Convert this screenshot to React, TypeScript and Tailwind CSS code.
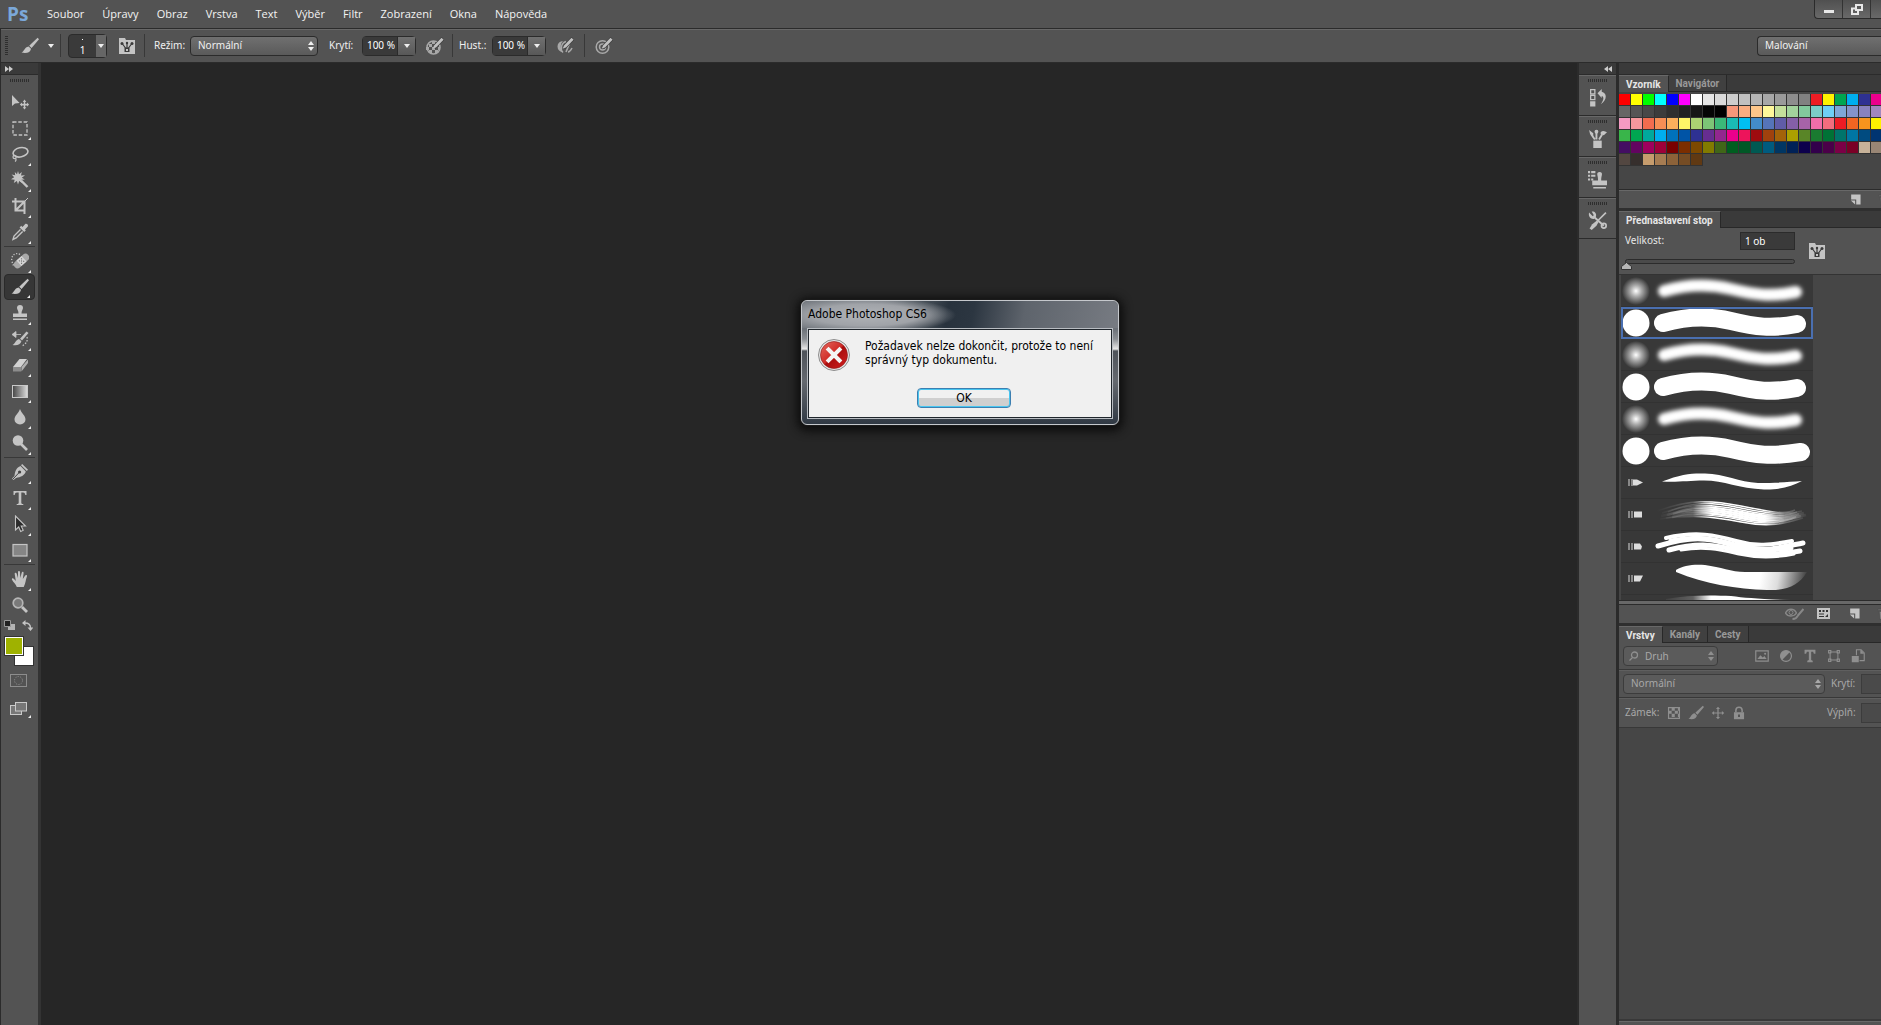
import React from 'react';

type IconProps = { children: React.ReactNode; className?: string; size?: number };

function Icon({ children, className = '', size = 18 }: IconProps) {
    return (
        <svg width={size} height={size} viewBox="0 0 18 18" fill="currentColor" className={`shrink-0 ${className}`} aria-hidden="true">
            {children}
        </svg>
    );
}

/* Shared drawings */
const brushShape = (
    <>
        <path d="M16.6 .8 18 2.2 10.6 11 8.2 8.8z" />
        <path d="M7.6 9.4 10 11.7C9.6 15.2 6 16.8.5 15.6 3.4 14.4 3.2 10 7.6 9.4z" />
    </>
);

const folderShape = (
    <>
        <path d="M1 1h6l1 2h9v14H1z" />
        <g fill="#3a3a3a">
            <path d="M6.5 10.5h5V15h-5z" />
            <circle cx="4" cy="6.5" r="1.5" />
            <circle cx="14" cy="6.5" r="1.5" />
            <circle cx="9" cy="6" r="1.2" />
        </g>
        <path d="M4.5 7l3 4M13.5 7l-3 4M9 6v5" stroke="#3a3a3a" strokeWidth="1.2" />
        <path d="M8 12h2v2H8z" />
    </>
);

const moveCross = (
    <path d="M9 1 6.4 4h1.8v4.2H4V6.4L1 9l3 2.6V9.8h4.2V14H6.4L9 17l2.6-3H9.8V9.8H14v1.8L17 9l-3-2.6v1.8H9.8V4h1.8z" />
);

const newShape = (
    <>
        <path d="M3 2h13v14h-6V9H3z" />
        <path d="M2.5 10.5h6v5.5z" />
    </>
);

const trashShape = (
    <path d="M6 1h6v2h5v2H1V3h5zM3 6h12l-1 11H4zM6 8v7M9 8v7M12 8v7" stroke="#4a4a4a" strokeWidth="1" />
);

const targetRings = (
    <g fill="none" stroke="currentColor">
        <circle cx="7.5" cy="10" r="6.3" strokeWidth="1.5" />
        <circle cx="7.5" cy="10" r="3" strokeWidth="1.5" />
    </g>
);

const penTip = (
    <>
        <path d="M17 1.5 8 10.5" stroke="#3b3b3b" strokeWidth="4" />
        <path d="M15.5 .8 17.6 2.8 10 10.4 6.8 11.6 8 8.4z" fill="#c0c0c0" />
    </>
);

type Tool = { name: string; icon: React.ReactNode; active?: boolean; single?: boolean };

const toolGroups: Tool[][] = [
    [
        {
            name: 'Přesun',
            single: true,
            icon: (
                <>
                    <path d="M1 2v11l3-2.6L8.6 10z" />
                    <path d="M13.5 6.5 11.7 9h1.1v1.8H11V9.6l-2.2 2 2.2 2v-1.2h1.8v1.8h-1.1l1.8 2.4 1.8-2.4h-1.1v-1.8h1.8v1.2l2.2-2-2.2-2v1.2h-1.8V9h1.1z" />
                </>
            ),
        },
        {
            name: 'Obdélníkový výběr',
            icon: <rect x="2" y="3" width="14" height="13" fill="none" stroke="currentColor" strokeWidth="1.3" strokeDasharray="3.5 1.8" />,
        },
        {
            name: 'Laso',
            icon: (
                <g fill="none" stroke="currentColor" strokeWidth="1.6">
                    <ellipse cx="9.5" cy="7.3" rx="7.5" ry="4.6" transform="rotate(-12 9.5 7.3)" />
                    <circle cx="3.6" cy="12" r="1.6" strokeWidth="1.2" />
                    <path d="M4.5 13.5C5.5 14.5 5 16 4 16.6" strokeWidth="1.2" />
                </g>
            ),
        },
        {
            name: 'Kouzelná hůlka',
            icon: (
                <>
                    <path d="M7 0l1 3.2L10.8 1 10 4.5l4-.2-3.2 2.4 3 1.8-3.4.2.6 3.3-2.8-2L7 13.5 5.9 10 2.8 12l.9-3.3L0 8.2l3.2-1.9L.6 3.6l3.6.6L3.8 1 6 3.2z" />
                    <path d="M10 9.5 16.5 16" stroke="currentColor" strokeWidth="2.4" />
                </>
            ),
        },
        {
            name: 'Oříznutí',
            icon: (
                <>
                    <path d="M4.5 1v12.5H14M1 4.5h12.5V17M4.5 13.5 13 5" fill="none" stroke="currentColor" strokeWidth="2" />
                    <path d="M12 6l5-5" stroke="currentColor" />
                </>
            ),
        },
        {
            name: 'Kapátko',
            icon: (
                <>
                    <path d="M11.5 4 14 1.2c1.6-1.4 4 .8 2.6 2.6L14 6.5l.8.9-1.6 1.6-4.6-4.6 1.6-1.6z" />
                    <path d="M9.5 6.5 3 13l-1 3.5L5.2 15l6.4-6.5" fill="none" stroke="currentColor" strokeWidth="1.4" />
                </>
            ),
        },
    ],
    [
        {
            name: 'Bodový retušovací štětec',
            icon: (
                <>
                    <g transform="rotate(-42 10.5 9)">
                        <rect x="1.5" y="5.3" width="18" height="7.4" rx="3.4" fill="#a9a9a9" />
                        <rect x="7" y="5.3" width="7" height="7.4" fill="#d4d4d4" />
                        <path d="M8.5 7.5h1M11.5 7.5h1M10 9h1M8.5 10.7h1M11.5 10.7h1" stroke="#555" />
                    </g>
                    <path d="M9 2.5C4-.5-.5 4.5 1 9.5s2 4 2 5" fill="none" stroke="currentColor" strokeWidth="1.3" strokeDasharray="1.2 1.6" />
                </>
            ),
        },
        { name: 'Štětec', active: true, icon: brushShape },
        {
            name: 'Klonovací razítko',
            icon: (
                <path d="M9 1a3 3 0 0 1 3 3c0 1.5-1.5 2.4-1.5 5.5H16V13H2V9.5h5.5C7.5 6.4 6 5.500 6 4a3 3 0 0 1 3-3zM2 14.5h14V16H2z" />
            ),
        },
        {
            name: 'Štětec historie',
            icon: (
                <>
                    <path d="M15.5 1.5 17.5 3 11 10.5 9 8.7z" />
                    <path d="M8 9l2.4 2.2C9.5 14.5 6 16 1.5 15c2.5-1 3-5 6.5-6z" />
                    <path d="M4 4.5h6M1 4.5l4-3v6z" stroke="currentColor" strokeWidth=".8" />
                    <path d="M16 7c1 4-1 7-5 9" fill="none" stroke="currentColor" strokeWidth="1.3" strokeDasharray="1.5 1.5" />
                </>
            ),
        },
        {
            name: 'Guma',
            icon: (
                <>
                    <path d="M8.5 3H16l-6 8H2z" fill="#d2d2d2" />
                    <path d="M2 11h8v4.5H2z" fill="#8c8c8c" />
                    <path d="M10.5 11 17 3.5V7l-6.5 8.500z" fill="#b0b0b0" />
                </>
            ),
        },
        {
            name: 'Přechod',
            icon: (
                <>
                    <defs>
                        <linearGradient id="gradTool">
                            <stop offset="0" stopColor="#444" />
                            <stop offset="1" stopColor="#ddd" />
                        </linearGradient>
                    </defs>
                    <rect x="1.5" y="3.5" width="15" height="12" fill="url(#gradTool)" stroke="#c9c9c9" />
                </>
            ),
        },
        { name: 'Rozostření', icon: <path d="M9 1c1.5 4.5 5.5 6.5 5.5 10.5a5.5 5 0 0 1-11 0C3.5 7.5 7.5 5.5 9 1z" /> },
        {
            name: 'Zesvětlení',
            icon: (
                <>
                    <circle cx="7" cy="6.5" r="5.3" />
                    <path d="M10 10l6 6" stroke="currentColor" strokeWidth="2.6" />
                </>
            ),
        },
    ],
    [
        {
            name: 'Pero',
            icon: (
                <>
                    <path d="M11.2 1 17 6.8 15.8 8 10 2.2z" />
                    <path d="M9.5 3l5.3 5.5C13.5 12.5 10 14 5 15l-2.5 2L1 15.5 3.5 13C4 8 5.5 4.5 9.5 3z" />
                    <path d="M2 16l6-6.3" stroke="#444" />
                    <circle cx="8.6" cy="9" r="1.6" fill="#444" />
                </>
            ),
        },
        {
            name: 'Text',
            icon: <path d="M2.5 2h13v4h-1.2c-.3-1.7-.8-2.5-2.3-2.5h-1.7v10.2c0 1 .6 1.2 2 1.300v1H5.7v-1c1.4-.1 2-.3 2-1.3V3.5H6C4.500 3.500 4 4.300 3.700 6H2.500z" />,
        },
        {
            name: 'Výběr cesty',
            icon: <path d="M4.5 1v14l3.2-3 2 4.5 2.5-1.2-2-4.3h4.3z" fill="#2c2c2c" stroke="#c4c4c4" strokeWidth="1.1" />,
        },
        {
            name: 'Obdélník',
            icon: <rect x="2" y="3.5" width="14" height="11.5" fill="#858585" stroke="#c4c4c4" strokeWidth="1.2" />,
        },
    ],
    [
        {
            name: 'Ručička',
            icon: (
                <path d="M5.8 17C4.8 14 2.5 12.5 1 9.7c-.6-1.4.9-1.9 1.8-.9l2 2.2-1.1-7c-.2-1.6 1.5-1.8 1.9-.4L7 8V2c0-1.5 1.9-1.5 2 0l.3 6 1.4-5.3c.4-1.4 2.1-1 1.9.5L11.8 9l2.4-3.4c.9-1.2 2.3-.3 1.7 1-1.4 3.4-1 6.4-3.2 10.4z" />
            ),
        },
        {
            name: 'Lupa',
            single: true,
            icon: (
                <>
                    <circle cx="7" cy="7" r="4.8" fill="#7a7a7a" stroke="#b5b5b5" strokeWidth="1.7" />
                    <path d="M11 11l5 5" stroke="currentColor" strokeWidth="2.8" />
                </>
            ),
        },
    ],
];

const dockPanels: Tool[] = [
    {
        name: 'Historie',
        icon: (
            <>
                <path d="M2.5 1.5h4v4h-4zM2.5 7h4v4h-4z" fill="none" stroke="currentColor" strokeWidth="1.2" />
                <path d="M2 12.5h5v5H2zM9 5l4-4v2.5c5 1 5.5 7.5-1 12 3.5-4.5 3-7.5 1-8v2z" />
            </>
        ),
    },
    {
        name: 'Štětce',
        icon: (
            <>
                <path d="M5 11h8v7H5z" />
                <path d="M8 10V1M6.5 10 3 5M10.5 10l3-5" stroke="currentColor" strokeWidth="1.8" />
                <circle cx="8" cy="2.5" r="1.8" />
                <path d="M1 1l4 3v3L2 5zM12 3c2-2 4-1 6 0l-3 3-3-1z" />
            </>
        ),
    },
    {
        name: 'Zdroj klonování',
        icon: (
            <>
                <path d="M0 1h2v2H0zM3 1h4v2H3zM0 4.5h2v2H0zM3 4.5h4v2H3zM0 8h2v2H0zM3 8h2v2H3z" />
                <path d="M11 2a2.2 2.2 0 0 1 2.2 2.5c-.5 2-.7 3-.7 5.500H18v4.5H4V10h5.5c0-2.5-.2-3.500-.7-5.500A2.200 2.200 0 0 1 11 2zM5 16h12v1.500H5z" />
            </>
        ),
    },
    {
        name: 'Přednastavení nástrojů',
        icon: (
            <>
                <path d="M5 5l10 9" stroke="currentColor" strokeWidth="1.8" />
                <path d="M1 1.5 4.5 5 5.5 4 3.5.5C6 0 8.5 2 7.5 5.5L5.5 7.5C3 8 0 5.5 1 1.5z" />
                <circle cx="15" cy="14" r="2.2" fill="none" stroke="currentColor" strokeWidth="1.6" />
                <path d="M17 1.5l-8 8" stroke="currentColor" strokeWidth="1.5" />
                <path d="M8.5 9 4 12.5 1.5 16.5 3.5 18 8 14l2-3.5z" />
            </>
        ),
    },
];

const menuItems = ['Soubor', 'Úpravy', 'Obraz', 'Vrstva', 'Text', 'Výběr', 'Filtr', 'Zobrazení', 'Okna', 'Nápověda'];

const swatchRows = [
    'ff0000 ffff00 00ff00 00ffff 0000ff ff00ff ffffff e6e6e6 dadada cdcdcd c0c0c0 b4b4b4 a7a7a7 9a9a9a 8e8e8e 818181 ed1c24 fff200 00a651 00aeef 2e3192 ec008c',
    '666666 555555 484848 3c3c3c 2f2f2f 222222 151515 050505 000000 f7977a f9ad81 fdc68a fff79a c4df9b a2d39c 82ca9d 7bcdc8 6ecff6 7ea7d8 8493ca 8882be a187be',
    'f49ac2 f6989d f26c4f f68e55 fbaf5c fff467 acd372 7cc576 3bb878 1abbb4 00bff3 438cca 5574b9 605ca8 855fa8 a763a8 f06ea9 f26d7d ed1c24 f26522 f7941d fff200',
    '39b54a 00a651 00a99d 00aeef 0072bc 0054a6 2e3192 662d91 92278f ec008c ed145b 9e0b0f a0410d a36209 aba000 598527 1a7b30 007236 00746b 0076a3 004b80 003471',
    '440e62 630460 9e005d 9e0039 790000 7b2e00 7d4900 827b00 406618 005e20 005826 005952 005b7f 003663 002157 0d004c 32004b 4b0049 7b0046 7a0026 c7b299 998675',
    '534741 362f2d c69c6d a67c52 8c6239 754c24 603913',
].map((row) => row.split(' '));

function SoftBrush() {
    return (
        <>
            <circle cx="15" cy="16" r="14" fill="url(#softDot)" />
            <path d="M43 16C60 11 85 8 110 14S150 22 175 17" fill="none" stroke="#fff" strokeWidth="12" strokeLinecap="round" filter="url(#soft)" />
        </>
    );
}

function HardBrush({ end = 176 }: { end?: number }) {
    return (
        <>
            <circle cx="15" cy="16" r="13.5" fill="#fff" />
            <path d={`M42 16C60 11 85 8 110 14S150 22 ${end} 17`} fill="none" stroke="#fff" strokeWidth="18" strokeLinecap="round" />
        </>
    );
}

function Ferrule({ tip }: { tip: string }) {
    return (
        <>
            <path d="M7 12h2v7H7zM10 12h2v7h-2z" fill="#888" />
            <path d={tip} fill="#ddd" />
        </>
    );
}

const bristles = [-10, -8, -6, -4, -2, 0, 2, 4, 6];

const brushes: React.ReactNode[] = [
    <SoftBrush />,
    <HardBrush />,
    <SoftBrush />,
    <HardBrush />,
    <SoftBrush />,
    <HardBrush end={180} />,
    <>
        <Ferrule tip="M12 12.5h4l6 3-6 3h-4z" />
        <path d="M41 14.5C60 7 72 6 84 6.500 104 7 118 15 137 16c18 0 30-1 44-2-10 5-22 9-38 8.500-25-1-40-9-60-9-16 0-26 2-42 1z" fill="#fff" />
    </>,
    <>
        <Ferrule tip="M13 12.500h8v6h-8z" />
        {bristles.map((dy, i) => (
            <path
                key={dy}
                d={`M${36 + ((i * 11) % 17)} ${17 + dy / 2}C70 ${10 + dy} 90 ${11 + dy} 120 ${17 + dy}S165 ${21 + dy / 2} ${174 + ((i * 7) % 12)} ${16 + dy / 2}`}
                fill="none"
                stroke="url(#bristle)"
                strokeWidth={i > 2 && i < 7 ? 2.4 : 1.5}
            />
        ))}
    </>,
    <>
        <Ferrule tip="M13 12.500h6l2 3-1 3h-7z" />
        <g fill="none" stroke="#fff" strokeWidth="4" strokeLinecap="round">
            <path d="M45 7C75 0 95 4 115 10s35 4 56 0" />
            <path d="M37 15C70 5 85 6 112 14s40 4 70-2" strokeWidth="5" />
            <path d="M50 10C80 4 95 9 115 14s35 6 55 3" strokeWidth="5" />
            <path d="M48 19C78 11 95 14 115 19s35 6 64 1" strokeWidth="5" />
            <path d="M60 19C85 15 100 19 118 23s35 4 55 0" strokeWidth="3" />
        </g>
    </>,
    <>
        <Ferrule tip="M13 12.500h9l-3 6h-6z" />
        <path d="M55 7C62 2 74 1 84 2c16 2 26 7 40 7h62c-8 14-22 19-40 18-30-1-62-6-91-18z" fill="url(#fadeRight)" />
    </>,
    <path d="M45 4C65 0 90 0 110 1c14 2 30 3 60 4v4H45z" fill="url(#bristle)" />,
];

function Updown({ className = '' }: { className?: string }) {
    return (
        <svg width="6" height="10" viewBox="0 0 6 10" className={className} fill="currentColor" aria-hidden="true">
            <path d="M0 4l3-4 3 4zM0 6h6l-3 4z" />
        </svg>
    );
}

function DownArrow() {
    return (
        <svg width="6" height="4" viewBox="0 0 6 4" fill="#eee" aria-hidden="true"><path d="M0 0h6L3 4z" /></svg>
    );
}

function Grip({ className = '' }: { className?: string }) {
    return <div className={`bg-[repeating-linear-gradient(to_right,#2e2e2e_0_1px,transparent_1px_2px)] h-[3px] w-[19px] ${className}`} />;
}

function DropInput({ id, label }: { id: string; label: string }) {
    return (
        <div className="flex items-center">
            <label htmlFor={id} className="w-[33px] whitespace-nowrap">{label}</label>
            <div className="flex h-5 rounded-sm border border-[#2b2b2b]">
                <input id={id} defaultValue="100 %" className="w-[34px] bg-[#3a3a3a] px-[2px] text-right text-[10px] text-white outline-none" />
                <button aria-label={label} className="flex w-[18px] items-center justify-center border-l border-[#2b2b2b] bg-linear-to-b from-[#707070] to-[#585858]">
                    <DownArrow />
                </button>
            </div>
        </div>
    );
}

function Separator() {
    return <div className="h-[23px] w-px shrink-0 bg-[#383838]" />;
}

function Tabs({ names }: { names: string[] }) {
    return (
        <div className="flex h-[17px] shrink-0 bg-[#3a3a3a] font-['Roboto',sans-serif] text-[10px] font-bold leading-[15px]" role="tablist">
            {names.map((name, i) => (
                <button
                    key={name}
                    role="tab"
                    aria-selected={i === 0}
                    className={i === 0
                        ? 'border-r border-[#282828] border-t border-t-[#686868] bg-[#535353] px-[7px] text-[#e6e6e6]'
                        : 'border-r border-b border-[#282828] bg-[#404040] px-[7px] text-[#999]'}
                >
                    {name}
                </button>
            ))}
            <div className="flex-1 border-b border-[#282828]" />
        </div>
    );
}

/* Menu and tool options */
function TopBars() {
    return (
        <header className="shrink-0 bg-[#535353]">
            <div className="flex h-7 items-center overflow-hidden">
                <span className="w-[34px] pl-[7px] font-['Open_Sans',sans-serif] text-[19px] font-bold leading-6 text-[#7ba8d9]">Ps</span>
                <nav className="flex flex-1 pl-1">
                    {menuItems.map((item) => (
                        <button key={item} className="px-[9px] font-['Open_Sans',sans-serif] text-[11px] text-[#f4f4f4]">{item}</button>
                    ))}
                </nav>
                <div className="flex h-[19px] w-[67px] self-start overflow-hidden rounded-bl-sm border-b border-l border-[#2b2b2b] bg-linear-to-b from-[#505050] to-[#696969] text-[#e8e8e8]">
                    <button aria-label="Minimalizovat" className="flex w-7 shrink-0 items-center justify-center border-r border-[#333]">
                        <span className="mt-1 h-[3px] w-[10px] bg-[#e8e8e8]" />
                    </button>
                    <button aria-label="Obnovit" className="flex w-7 shrink-0 items-center justify-center border-r border-[#333]">
                        <svg width="12" height="11" viewBox="0 0 12 11" fill="none" stroke="currentColor" strokeWidth="2" aria-hidden="true">
                            <path d="M5 1h6v5H5zM4 4.5H1V10h6V7" />
                        </svg>
                    </button>
                    <button aria-label="Zavřít" className="w-7 shrink-0" />
                </div>
            </div>
            <div className="flex h-[35px] items-center overflow-hidden border-b border-l border-t border-[#2b2b2b] text-[10px] text-[#f0f0f0] shadow-[inset_0_1px_0_#686868]">
                <div className="ml-1 h-5 w-[3px] bg-[repeating-linear-gradient(to_bottom,#2e2e2e_0_1px,transparent_1px_2px)]" />
                <button aria-label="Štětec" className="ml-[13px] flex items-center gap-[9px] text-[#c4c4c4]">
                    <Icon>{brushShape}</Icon>
                    <DownArrow />
                </button>
                <div className="ml-[6px]"><Separator /></div>
                <button aria-label="Stopa štětce" className="ml-[7px] flex h-6 w-[39px] rounded-sm border border-[#2b2b2b] bg-[#3a3a3a]">
                    <span className="flex w-[27px] flex-col items-center pt-[4px] text-[10px] leading-[13px] text-white">
                        <span className="size-px bg-white" />
                        <span className="pt-[4px]">1</span>
                    </span>
                    <span className="flex h-full flex-1 items-center justify-center bg-[#666]">
                        <DownArrow />
                    </span>
                </button>
                <button aria-label="Panel štětců" className="ml-[11px] text-[#c4c4c4]"><Icon>{folderShape}</Icon></button>
                <div className="ml-2"><Separator /></div>
                <label htmlFor="mode" className="ml-[9px] w-9">Režim:</label>
                <div className="relative">
                    <select id="mode" className="h-5 w-32 appearance-none rounded-sm border border-[#2b2b2b] bg-linear-to-b from-[#707070] to-[#5a5a5a] pl-[7px] text-[10px] outline-none">
                        <option>Normální</option>
                    </select>
                    <Updown className="pointer-events-none absolute right-1 top-[5px]" />
                </div>
                <div className="ml-[11px] mr-[10px]"><DropInput id="opacity" label="Krytí:" /></div>
                <button aria-label="Přítlak pro krytí" className="text-[#a8a8a8]">
                    <Icon>
                        <circle cx="7.5" cy="10.5" r="6.5" fill="none" stroke="currentColor" strokeWidth="1.5" />
                        <path d="M3 7h3v3H3zM9 7h3v3H9zM6 10h3v3H6zM6 4h3v3H6zM3 13h3v3H3zM9 13h3v3H9zM0 10h3v3H0zM12 10h2v3h-2z" />
                        {penTip}
                    </Icon>
                </button>
                <div className="ml-2 mr-[6px]"><Separator /></div>
                <DropInput id="flow" label="Hust.:" />
                <button aria-label="Rozprašovač" className="ml-[10px] text-[#a8a8a8]">
                    <Icon>
                        <path d="M7 4a5.500 5.500 0 1 0 0 11c-3-3-3-8 0-11z" />
                        <path d="M10 4.500C5 6 4 13 7 15.500M10 15c2-5 3-7 4-10M12 15c2 0 3-2 4-4" fill="none" stroke="currentColor" strokeWidth="1.500" />
                        {penTip}
                    </Icon>
                </button>
                <div className="ml-[10px] mr-[10px]"><Separator /></div>
                <button aria-label="Přítlak pro velikost" className="text-[#a8a8a8]"><Icon>{targetRings}{penTip}</Icon></button>
                <select aria-label="Pracovní plocha" className="ml-auto h-5 w-[124px] shrink-0 appearance-none rounded-l-sm border border-r-0 border-[#2b2b2b] bg-linear-to-b from-[#707070] to-[#5a5a5a] pl-[7px] text-[10px] outline-none">
                    <option>Malování</option>
                </select>
            </div>
        </header>
    );
}

function ToolBar() {
    return (
        <aside className="flex w-[41px] shrink-0 flex-col border-l border-r-3 border-[#2b2b2b] border-r-[#333] bg-[#535353] text-[#c4c4c4]">
            <div className="h-[12px] border-b border-[#2b2b2b] bg-[#3a3a3a] pl-1 pt-[3px]">
                <svg width="8" height="6" viewBox="0 0 8 6" fill="#ccc" aria-hidden="true"><path d="M0 0l4 3-4 3zM4 0l4 3-4 3z" /></svg>
            </div>
            <Grip className="ml-[9px] mt-1" />
            <div className="mt-[7px] flex flex-col">
                {toolGroups.map((group, g) => (
                    <div key={g} className={g > 0 ? 'mx-[3px] mt-px border-t border-[#383838] pt-px' : 'mx-[3px]'}>
                        {group.map((tool) => (
                            <button
                                key={tool.name}
                                aria-label={tool.name}
                                className={tool.active
                                    ? 'relative flex h-[26px] w-[31px] items-center justify-center rounded-sm border border-[#2a2a2a] bg-[#363636]'
                                    : 'relative flex h-[26px] w-[31px] items-center justify-center'}
                            >
                                <Icon>{tool.icon}</Icon>
                                {!tool.single && (
                                    <svg width="3" height="3" viewBox="0 0 3 3" fill="#eee" className="absolute bottom-px right-1" aria-hidden="true"><path d="M3 0v3H0z" /></svg>
                                )}
                            </button>
                        ))}
                    </div>
                ))}
            </div>
            {/* Foreground and background colours */}
            <div className="mt-[2px] flex justify-between pl-[3px] pr-[5px]">
                <svg width="11" height="11" viewBox="0 0 11 11" aria-hidden="true">
                    <path d="M4 4h7v6H4z" fill="#b5b5b5" />
                    <path d="M.5.5h6v6h-6z" fill="#222" stroke="#999" />
                </svg>
                <svg width="11" height="11" viewBox="0 0 11 11" aria-hidden="true">
                    <path d="M3 3c4 0 5.500 1.500 5.500 5" fill="none" stroke="#c4c4c4" strokeWidth="1.400" />
                    <path d="M0 3l3.500-3v6zM5.500 7.500h6L8.500 11z" fill="#c4c4c4" />
                </svg>
            </div>
            <div className="relative ml-[3px] mt-[5px] h-[30px] w-[30px]">
                <div className="absolute bottom-0 right-0 size-5 border border-[#333] bg-white" />
                <div className="absolute left-0 top-0 size-5 border border-[#333] bg-[#9fb200] shadow-[inset_0_0_0_1px_#fff]" />
            </div>
            <button aria-label="Rychlá maska" className="ml-[9px] mt-2 text-[#8d8d8d]">
                <svg width="17" height="13" viewBox="0 0 17 13" fill="none" stroke="currentColor" aria-hidden="true">
                    <rect x=".5" y=".5" width="16" height="12" />
                    <circle cx="8.500" cy="6.500" r="4" strokeDasharray="1.200 1.300" />
                </svg>
            </button>
            <button aria-label="Režim obrazovky" className="ml-[9px] mt-[15px]">
                <svg width="22" height="16" viewBox="0 0 22 16" stroke="#c9c9c9" fill="#777" aria-hidden="true">
                    <rect x=".5" y="3.500" width="11" height="9" />
                    <rect x="5.500" y=".5" width="11" height="8.500" />
                    <path d="M21 13v3h-3z" fill="#eee" stroke="none" />
                </svg>
            </button>
        </aside>
    );
}

function Dock() {
    return (
        <aside className="w-[42px] shrink-0 border-l-2 border-r-3 border-[#2b2b2b] bg-[#535353] text-[#c4c4c4]">
            <div className="flex h-[12px] justify-end border-b border-[#2b2b2b] bg-[#3a3a3a] pr-1 pt-[3px]">
                <svg width="8" height="6" viewBox="0 0 8 6" fill="#ccc" aria-hidden="true"><path d="M4 0L0 3l4 3zM8 0L4 3l4 3z" /></svg>
            </div>
            {dockPanels.map((panel) => (
                <div key={panel.name} className="flex h-[41px] flex-col items-center border-b border-[#2b2b2b] shadow-[inset_0_1px_0_#686868]">
                    <Grip className="mt-1" />
                    <button aria-label={panel.name} className="mt-[6px]"><Icon size={19}>{panel.icon}</Icon></button>
                </div>
            ))}
        </aside>
    );
}

function Panels() {
    return (
        <aside className="flex w-[262px] shrink-0 flex-col overflow-hidden bg-[#535353] text-[10px] text-[#e6e6e6]">
            <div className="h-[12px] shrink-0 border-b border-[#2b2b2b] bg-[#3a3a3a]" />

            {/* Swatches */}
            <Tabs names={['Vzorník', 'Navigátor']} />
            <div className="h-[98px] shrink-0 overflow-hidden border-b border-[#2b2b2b] bg-[#464646] pt-[2px]">
                {swatchRows.map((row, r) => (
                    <div key={r} className="flex">
                        {row.map((color, c) => (
                            <div key={c} className="size-3 shrink-0 border-b border-r border-[#333]" style={{ backgroundColor: `#${color}` }} />
                        ))}
                    </div>
                ))}
            </div>
            <div className="flex h-[18px] shrink-0 items-center gap-4 pl-[230px] text-[#c4c4c4] shadow-[inset_0_1px_0_#686868]">
                <button aria-label="Nový vzorek"><Icon size={13}>{newShape}</Icon></button>
                <button aria-label="Odstranit vzorek" className="text-[#888]"><Icon size={13}>{trashShape}</Icon></button>
            </div>
            <div className="h-[3px] shrink-0 bg-[#2f2f2f]" />

            {/* Brush presets */}
            <Tabs names={['Přednastavení stop']} />
            <div className="h-[47px] shrink-0 border-b border-[#333]">
                <div className="flex h-[31px] pl-[6px] pt-1">
                    <label htmlFor="size" className="w-[115px] leading-4">Velikost:</label>
                    <input id="size" defaultValue="1 ob" className="h-[18px] w-[55px] border border-[#2b2b2b] bg-[#3a3a3a] px-1 text-[10px] text-white outline-none" />
                    <button aria-label="Panel štětců" className="ml-[13px] mt-[10px] self-start text-[#c4c4c4]"><Icon>{folderShape}</Icon></button>
                </div>
                <div className="relative ml-[6px] h-[11px] w-[170px]">
                    <div className="h-[5px] rounded-full border border-[#2b2b2b] bg-[#4a4a4a]" />
                    <svg width="11" height="8" viewBox="0 0 11 8" className="absolute -left-1 top-[3px]" aria-hidden="true">
                        <path d="M.5 7.500V4.500l5-4 5 4v3z" fill="#b5b5b5" stroke="#333" />
                    </svg>
                    <input type="range" aria-label="Velikost" min="1" max="100" defaultValue="1" className="absolute inset-0 w-full opacity-0" />
                </div>
            </div>
            <div className="h-[326px] shrink-0 overflow-hidden border-b border-[#2b2b2b] bg-[#464646] pl-[2px]">
                <svg width="0" height="0" className="absolute" aria-hidden="true">
                    <defs>
                        <radialGradient id="softDot">
                            <stop offset="0" stopColor="#fff" />
                            <stop offset=".4" stopColor="#aaa" />
                            <stop offset="1" stopColor="#383838" />
                        </radialGradient>
                        <filter id="soft" filterUnits="userSpaceOnUse" x="30" y="-4" width="162" height="40">
                            <feGaussianBlur stdDeviation="2" />
                        </filter>
                        <linearGradient id="bristle" gradientUnits="userSpaceOnUse" x1="36" y1="0" x2="186" y2="0">
                            <stop offset="0" stopColor="#fff" stopOpacity="0" />
                            <stop offset=".24" stopColor="#fff" stopOpacity=".2" />
                            <stop offset=".36" stopColor="#fff" />
                            <stop offset=".72" stopColor="#fff" />
                            <stop offset=".85" stopColor="#fff" stopOpacity=".3" />
                            <stop offset="1" stopColor="#fff" stopOpacity=".05" />
                        </linearGradient>
                        <linearGradient id="fadeRight" gradientUnits="userSpaceOnUse" x1="140" y1="10" x2="184" y2="18">
                            <stop offset="0" stopColor="#fff" />
                            <stop offset=".4" stopColor="#ddd" />
                            <stop offset="1" stopColor="#444" />
                        </linearGradient>
                    </defs>
                </svg>
                {brushes.map((brush, i) => (
                    <div
                        key={i}
                        className={i === 1
                            ? 'h-8 w-48 bg-[#383838] outline-2 -outline-offset-2 outline-[#4a6fb0]'
                            : 'h-8 w-48 border-b border-[#323232] bg-[#383838]'}
                    >
                        <svg width="192" height="32" viewBox="0 0 192 32" aria-hidden="true">{brush}</svg>
                    </div>
                ))}
            </div>
            <div className="flex h-[22px] shrink-0 items-center border-t-3 border-[#686868] pl-[166px] text-[#c4c4c4] shadow-[inset_0_1px_0_#2b2b2b]">
                <button aria-label="Náhled štětce" className="text-[#888]">
                    <svg width="19" height="12" viewBox="0 0 19 12" fill="none" stroke="currentColor" aria-hidden="true">
                        <path d="M.5 5C3 0 9 0 11.500 5 9 9 3 9 .5 5z" strokeWidth="1.400" />
                        <circle cx="6" cy="4.500" r="2" />
                        <path d="M18.500 1 12.500 8M12.500 8c-1 3-3 3-5 3" strokeWidth="2" />
                    </svg>
                </button>
                <button aria-label="Správce předvoleb" className="ml-[13px]">
                    <svg width="13" height="11" viewBox="0 0 13 11" aria-hidden="true">
                        <path d="M0 0h13v11H0z" fill="#c4c4c4" />
                        <path d="M2 2h2v2H2zM5.500 2h2v2h-2zM9 2h2v2H9zM2 5.500h5v1H2zM2 8h5v1H2zM8 9l3-3v3z" fill="#333" />
                    </svg>
                </button>
                <button aria-label="Nová stopa" className="ml-[18px]"><Icon size={13}>{newShape}</Icon></button>
                <button aria-label="Odstranit stopu" className="ml-4 text-[#888]"><Icon size={13}>{trashShape}</Icon></button>
            </div>
            <div className="h-[3px] shrink-0 bg-[#2f2f2f]" />

            {/* Layers */}
            <Tabs names={['Vrstvy', 'Kanály', 'Cesty']} />
            <div className="flex h-[27px] shrink-0 items-center border-b border-[#383838] pl-1 text-[#8f8f8f]">
                <div className="relative mr-[37px]">
                    <select aria-label="Filtr vrstev" className="h-5 w-[95px] appearance-none rounded-sm border border-[#3c3c3c] bg-[#5b5b5b] pl-[21px] text-[10px] text-[#a8a8a8] outline-none">
                        <option>Druh</option>
                    </select>
                    <svg width="10" height="10" viewBox="0 0 10 10" fill="none" stroke="currentColor" strokeWidth="1.300" className="pointer-events-none absolute left-[6px] top-[5px]" aria-hidden="true">
                        <circle cx="5.500" cy="4" r="3" />
                        <path d="M3.500 6.500.5 9.500" />
                    </svg>
                    <Updown className="pointer-events-none absolute right-1 top-[5px]" />
                </div>
                <div className="flex items-center gap-[10px]">
                    <button aria-label="Obrazové vrstvy">
                        <Icon size={14}><path d="M1 2.500h16v13H1z" fill="none" stroke="currentColor" strokeWidth="1.500" /><path d="M3 13l4-5 3 3 2-2 3 4z" /><circle cx="13" cy="6" r="1.300" /></Icon>
                    </button>
                    <button aria-label="Vrstvy úprav">
                        <Icon size={14}><circle cx="9" cy="9" r="7" fill="none" stroke="currentColor" strokeWidth="1.500" /><path d="M4 14A7 7 0 0 1 14 4z" /></Icon>
                    </button>
                    <button aria-label="Textové vrstvy">
                        <Icon size={14}><path d="M2 1h14v5h-2l-1-2.500h-2.500V14l2 1v2h-7v-2l2-1V3.500H5L4 6H2z" /></Icon>
                    </button>
                    <button aria-label="Vrstvy tvarů">
                        <Icon size={14}><path d="M4 4h10v10H4zM2 2h3v3H2zM13 2h3v3h-3zM2 13h3v3H2zM13 13h3v3h-3z" fill="none" stroke="currentColor" strokeWidth="1.300" /></Icon>
                    </button>
                    <button aria-label="Inteligentní objekty">
                        <Icon size={14}><path d="M7 8V1h6l4 4v10h-6" fill="none" stroke="currentColor" strokeWidth="1.400" /><path d="M12 1v5h5zM1 9h9v8H1z" /></Icon>
                    </button>
                </div>
            </div>
            <div className="flex h-7 shrink-0 items-center border-b border-[#383838] pl-1 text-[#a8a8a8] shadow-[inset_0_1px_0_#5f5f5f]">
                <div className="relative mr-[6px]">
                    <select aria-label="Režim prolnutí" className="h-5 w-[202px] appearance-none rounded-sm border border-[#3c3c3c] bg-[#5b5b5b] pl-[7px] text-[10px] outline-none">
                        <option>Normální</option>
                    </select>
                    <Updown className="pointer-events-none absolute right-1 top-[5px]" />
                </div>
                <label htmlFor="layerOpacity" className="w-[30px] shrink-0">Krytí:</label>
                <input id="layerOpacity" disabled className="h-5 w-9 shrink-0 border border-[#3c3c3c] bg-[#4a4a4a]" />
            </div>
            <div className="flex h-[30px] shrink-0 items-center border-b border-[#383838] pl-[6px] text-[#8f8f8f] shadow-[inset_0_1px_0_#5f5f5f]">
                <span className="w-[42px] text-[#a8a8a8]">Zámek:</span>
                <div className="flex flex-1 items-center gap-[7px]">
                    <button aria-label="Zamknout průhlednost">
                        <Icon size={14}><path d="M2 2h14v14H2z" fill="none" stroke="currentColor" strokeWidth="1.500" /><path d="M6 2h4v4H6zM2 6h4v4H2zM10 6h4v4h-4zM6 10h4v4H6zM14 2h2v4h-2zM14 10h2v4h-2z" /></Icon>
                    </button>
                    <button aria-label="Zamknout obraz"><Icon size={16}>{brushShape}</Icon></button>
                    <button aria-label="Zamknout polohu"><Icon size={14}>{moveCross}</Icon></button>
                    <button aria-label="Zamknout vše">
                        <Icon size={14}><path d="M2.500 8h13v9h-13z" /><path d="M5 8V5.500a4 4 0 0 1 8 0V8" fill="none" stroke="currentColor" strokeWidth="2" /><path d="M8 11h2v3H8z" fill="#444" /></Icon>
                    </button>
                </div>
                <label htmlFor="layerFill" className="w-[34px] shrink-0 text-[#a8a8a8]">Výplň:</label>
                <input id="layerFill" disabled className="h-5 w-5 shrink-0 border border-r-0 border-[#3c3c3c] bg-[#4a4a4a]" />
            </div>
            <div className="flex-1 border-b-2 border-[#383838] bg-[#464646]" />
            <div className="h-1 shrink-0 border-t border-[#686868]" />
        </aside>
    );
}

function ErrorDialog() {
    return (
        <section
            role="alertdialog"
            aria-labelledby="dialogTitle"
            className="absolute left-[801px] top-[300px] w-[318px] rounded-md border border-[#c5c8cc] bg-[linear-gradient(to_bottom,#6c7178_0,#6c7178_28px,#8b8f94_38px,#e8e8e8_48px,#4e535a_50px,#65696f_80px,#2c3540_126px)] px-[5px] pb-[5px] font-['DejaVu_Sans_Condensed','DejaVu_Sans',sans-serif] text-black shadow-[0_0_0_1px_#1a1a1a,0_2px_10px_4px_#0c0c0c]"
        >
            <div className="-mx-[5px] rounded-t-md bg-[radial-gradient(ellipse_90px_18px_at_64px_14px,#b0b3b7_0,#a0a3a8_60%,transparent_100%),linear-gradient(100deg,#757a80_0,#6a7077_25%,#3d464f_41%,#28323d_46%,#2c3641_54%,#5e646c_70%,#777b82_100%)] px-[6px]">
                <h1 id="dialogTitle" className="h-[27px] text-[12px] leading-[26px]">Adobe Photoshop CS6</h1>
            </div>
            <div className="border border-[#b9bdc2] bg-[#f0f0f0] shadow-[inset_0_0_0_1px_#20262c]">
                <div className="flex gap-[15px] pl-[10px] pt-[10px]">
                    <svg width="32" height="32" viewBox="0 0 32 32" className="shrink-0" aria-hidden="true">
                        <defs>
                            <linearGradient id="red" x1="0" y1="0" x2="1" y2="1">
                                <stop offset="0" stopColor="#e66a60" />
                                <stop offset=".48" stopColor="#cf2a26" />
                                <stop offset=".52" stopColor="#a80d0d" />
                                <stop offset="1" stopColor="#d52020" />
                            </linearGradient>
                        </defs>
                        <circle cx="16" cy="16" r="15.500" fill="#e8e8e8" stroke="#8c8c8c" />
                        <circle cx="16" cy="16" r="13.500" fill="url(#red)" stroke="#8a1a1a" strokeWidth=".6" />
                        <path d="M10.500 10.500l11 11M21.500 10.500l-11 11" stroke="#f4f4f4" strokeWidth="4" strokeLinecap="square" />
                    </svg>
                    <p className="whitespace-pre text-[12px] leading-[14px]">{'Požadavek nelze dokončit, protože to není\nsprávný typ dokumentu.'}</p>
                </div>
                <div className="flex justify-center pb-[10px] pl-2 pt-[17px]">
                    <button className="h-5 w-[94px] rounded-sm border border-[#3c7fb1] bg-linear-to-b from-[#f0f0f0] from-50% to-[#cfcfcf] to-50% text-[12px] leading-4 shadow-[inset_0_0_0_1px_#48c6f0]">OK</button>
                </div>
            </div>
        </section>
    );
}

export default function App() {
    return (
        <div className="relative flex h-screen w-full flex-col overflow-hidden bg-[#262626] font-['Noto_Sans',sans-serif]">
            <TopBars />
            <div className="flex min-h-0 flex-1">
                <ToolBar />
                <main className="min-w-0 flex-1" />
                <Dock />
                <Panels />
            </div>
            <ErrorDialog />
        </div>
    );
}
